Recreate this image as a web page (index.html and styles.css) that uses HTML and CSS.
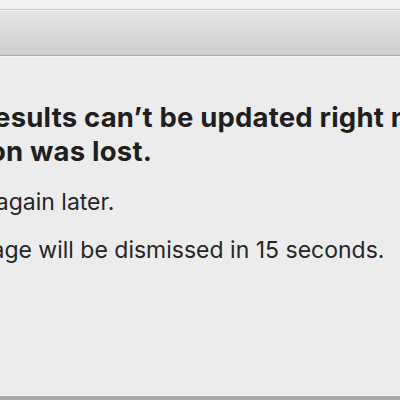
FILE: index.html
```html
<!DOCTYPE html>
<html lang="en">
<head>
  <meta charset="UTF-8" />
  <title>Search results</title>
  <link rel="stylesheet" href="styles.css">
</head>
<body>

<!-- Window chrome -->
<div class="title-strip"></div>
<div class="toolbar"></div>

<!-- Alert text -->
<div class="alert">
  <div class="alert-text">
    <h1>Search results can’t be updated right now because the<br>connection was lost.</h1>
    <p>Please try again later.</p>
    <p>This message will be dismissed in 15 seconds.</p>
  </div>
</div>

<div class="bottom-edge"></div>

</body>
</html>
```

FILE: styles.css
```css
* { margin: 0; padding: 0; box-sizing: border-box; }
html, body {
  width: 100%;
  height: 100%;
  overflow: hidden;
  background: #ececec;
  font-family: Inter, "Noto Sans", sans-serif;
  color: #222;
}

body {
  display: flex;
  flex-direction: column;
}

.title-strip {
  height: 10px;
  background: #f1f1f1;
  border-bottom: 1px solid #c9c9c9;
}

.toolbar {
  height: 46px;
  background: linear-gradient(#e4e4e4, #cfcfcf);
  border-top: 1px solid #f3f3f3;
  border-bottom: 1px solid #a6a6a6;
  box-shadow: 0 1px 0 #f4f4f4;
}

.alert {
  flex: 1;
  overflow: hidden;
}

.alert-text {
  margin-left: -130px;
  padding-top: 44px;
  white-space: nowrap;
}

.alert-text h1 {
  font-size: 27.5px;
  font-weight: 700;
  line-height: 34px;
  letter-spacing: 0.2px;
  text-indent: 11px;
  color: #1f1f1f;
  margin-bottom: 20px;
}

.alert-text p {
  font-size: 23px;
  line-height: 28px;
  color: #262626;
  padding-left: 11px;
  margin-bottom: 20px;
}

.bottom-edge {
  height: 5px;
  background: #a9a9a9;
  border-top: 1px solid #f5f5f5;
}
```
